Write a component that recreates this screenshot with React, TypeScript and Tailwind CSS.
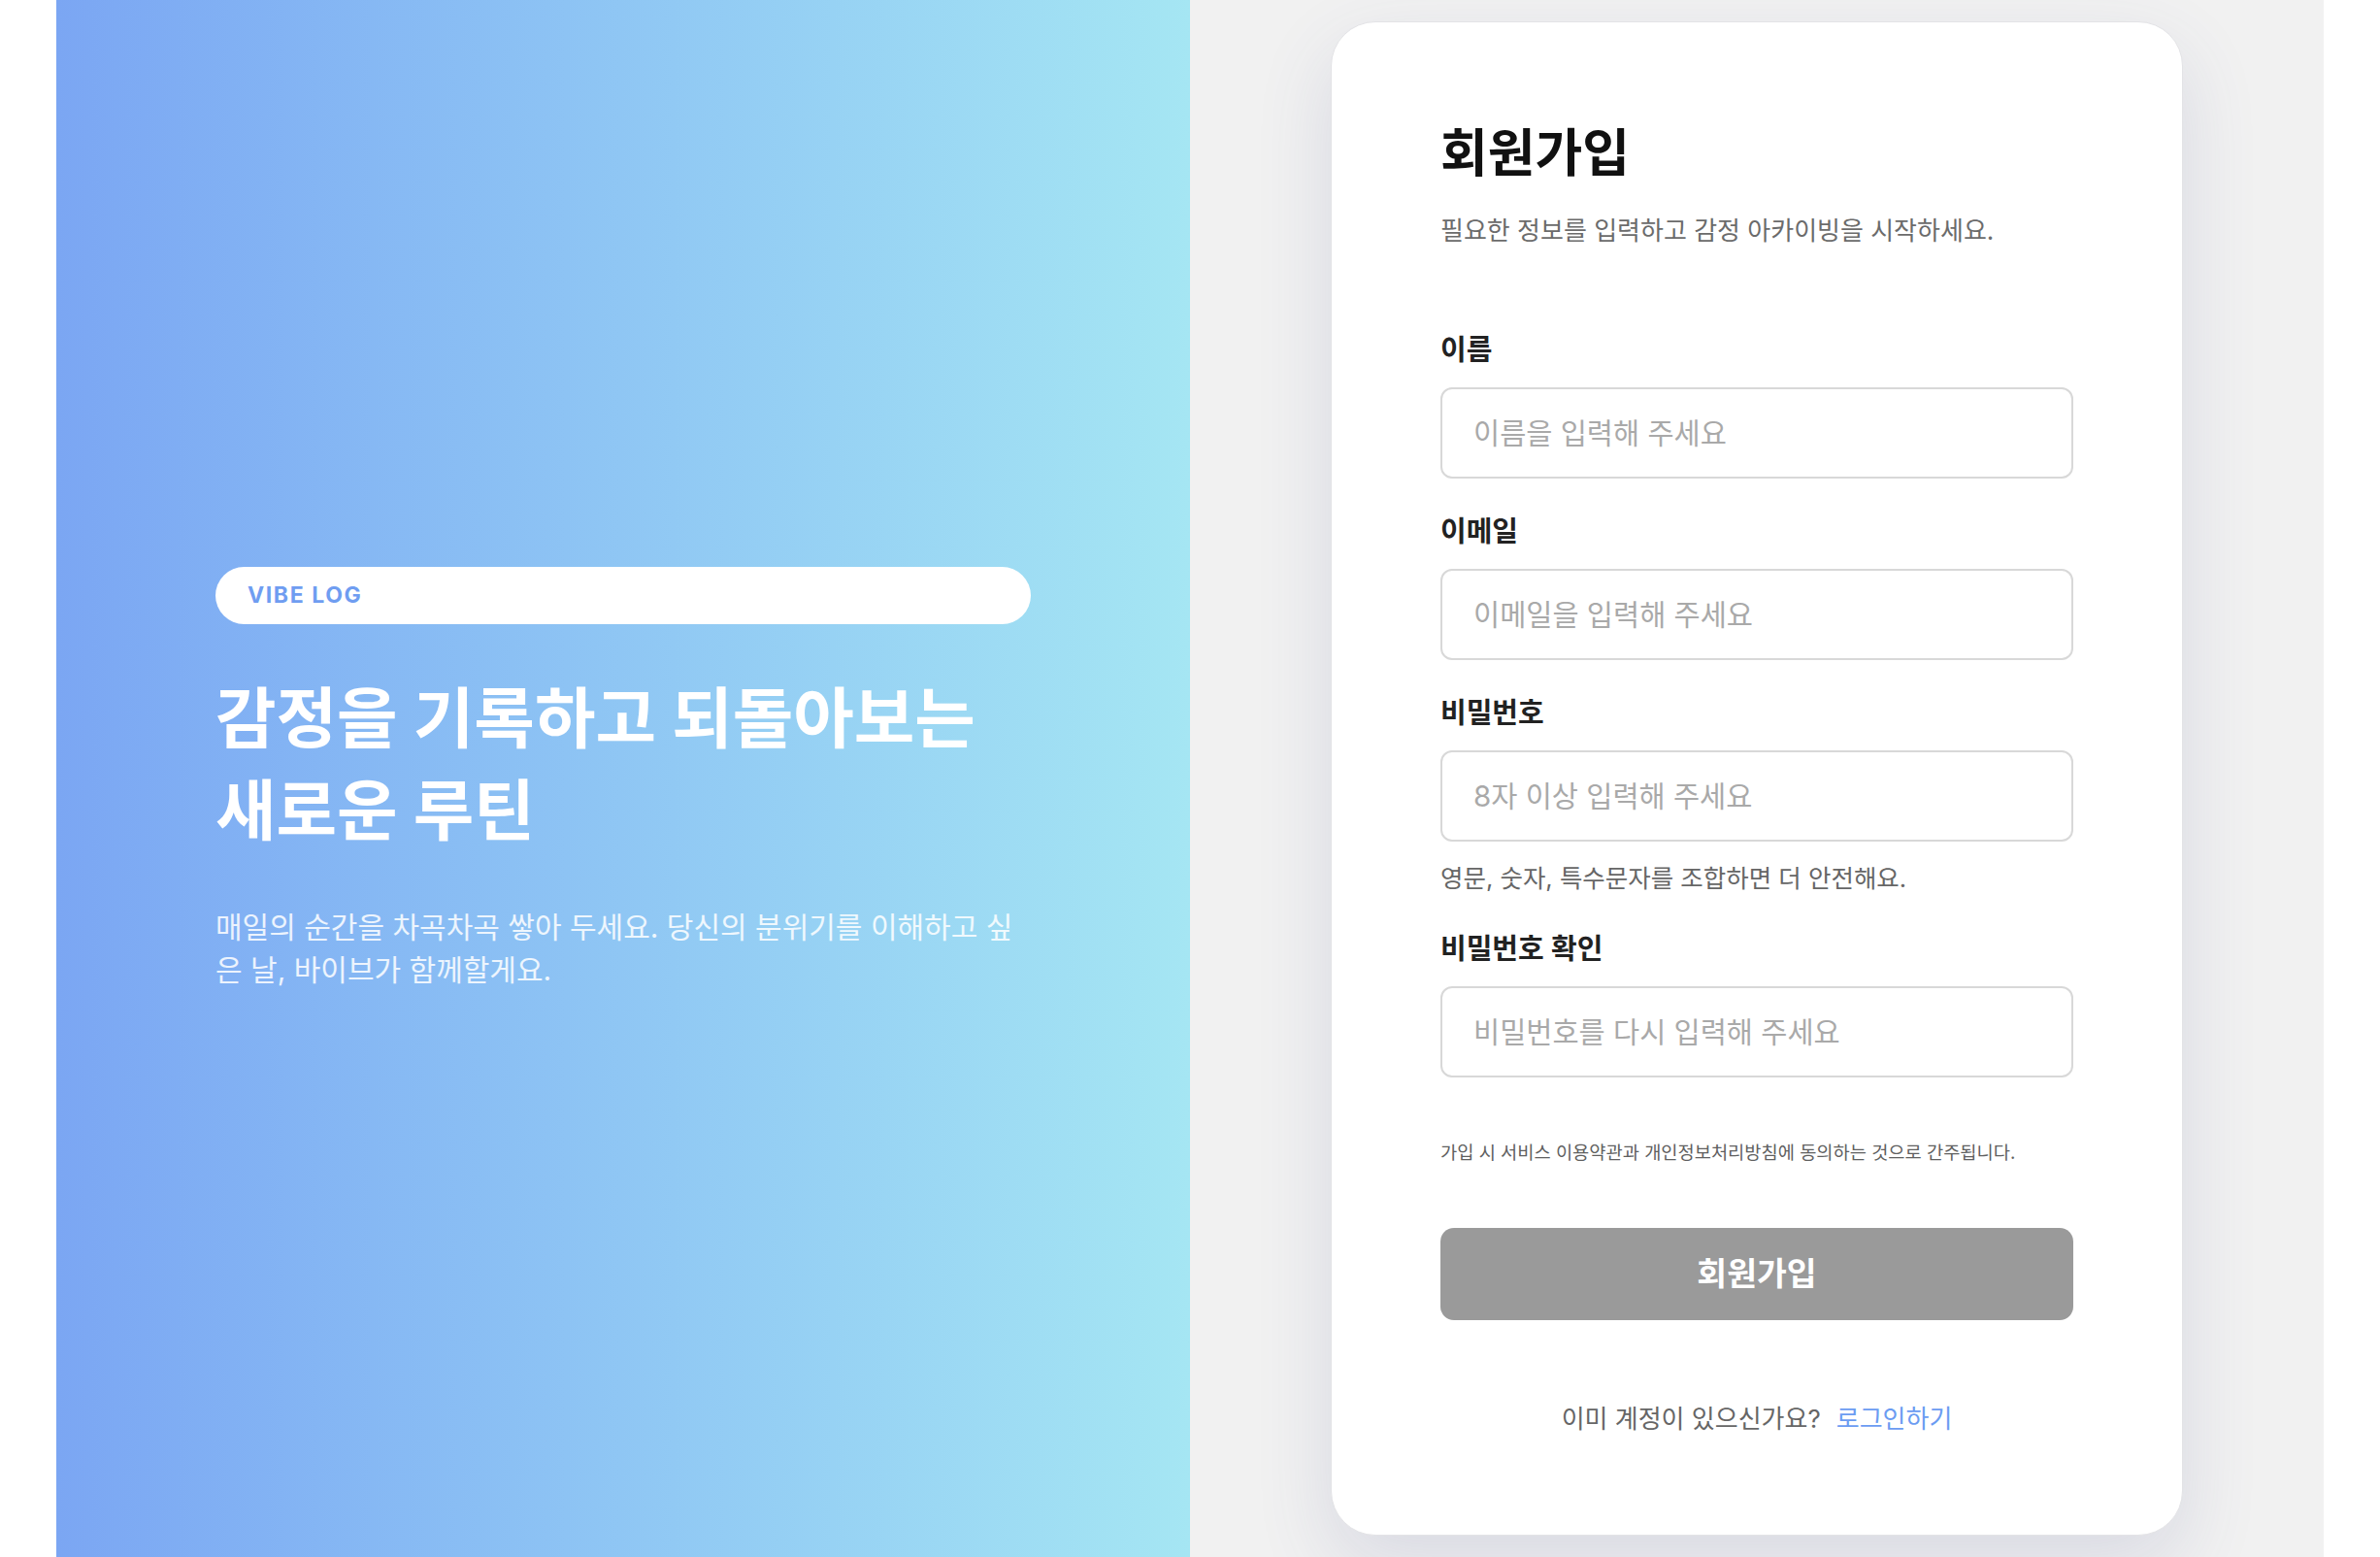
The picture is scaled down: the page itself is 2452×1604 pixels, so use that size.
const fontStack = "font-['Inter','Noto_Sans_CJK_KR',sans-serif]";

type Field = {
  label: string;
  placeholder: string;
  type: string;
  hint?: string;
};

const fields: Field[] = [
  { label: "이름", placeholder: "이름을 입력해 주세요", type: "text" },
  { label: "이메일", placeholder: "이메일을 입력해 주세요", type: "email" },
  {
    label: "비밀번호",
    placeholder: "8자 이상 입력해 주세요",
    type: "password",
    hint: "영문, 숫자, 특수문자를 조합하면 더 안전해요.",
  },
  { label: "비밀번호 확인", placeholder: "비밀번호를 다시 입력해 주세요", type: "password" },
];

function Hero() {
  return (
    <section className="flex items-center justify-center bg-gradient-to-r from-[#7ba6f3] to-[#a5e6f3]">
      <div className="w-[840px]">
        <div className="flex h-[59px] items-center rounded-full bg-white px-[33px]">
          <span className="font-['Inter',sans-serif] text-[23px] font-bold tracking-[0.07em] text-[#6f9df1]">
            VIBE LOG
          </span>
        </div>
        <h1 className="mt-[50px] text-[68px] font-bold leading-[95px] text-white">
          감정을 기록하고 되돌아보는
          <br />
          새로운 루틴
        </h1>
        <p className="mt-[50px] text-[30px] leading-[44px] text-white/85">
          매일의 순간을 차곡차곡 쌓아 두세요. 당신의 분위기를 이해하고 싶은 날, 바이브가 함께할게요.
        </p>
      </div>
    </section>
  );
}

function SignupCard() {
  return (
    <div className="w-[878px] rounded-[46px] border border-[#e3e3e6] bg-white px-[112px] pb-[102px] pt-[103px] shadow-[0_30px_80px_rgba(70,80,140,0.14)]">
      <h2 className="text-[53px] font-bold leading-[65px] text-[#111]">회원가입</h2>
      <p className="mt-[29px] text-[26px] leading-[36px] text-[#6b6b6b]">
        필요한 정보를 입력하고 감정 아카이빙을 시작하세요.
      </p>

      <form className="mt-[85px] flex flex-col gap-[35px]" onSubmit={(e) => e.preventDefault()}>
        {fields.map((f) => (
          <div key={f.label}>
            <label className="mb-[18px] block text-[29px] font-semibold leading-[40px] text-[#222]">
              {f.label}
            </label>
            <input
              type={f.type}
              placeholder={f.placeholder}
              className="h-[94px] w-full rounded-[12px] border-2 border-[#d8d8d8] bg-white px-[32px] text-[29.5px] text-[#222] outline-none placeholder:text-[#a9a9a9]"
            />
            {f.hint && (
              <p className="mt-[20px] text-[25.5px] leading-[36px] text-[#666]">{f.hint}</p>
            )}
          </div>
        ))}

        <p className="mt-[30px] text-[18.7px] leading-[26px] text-[#5f5f5f]">
          가입 시 서비스 이용약관과 개인정보처리방침에 동의하는 것으로 간주됩니다.
        </p>

        <button
          type="submit"
          className="mt-[29px] h-[95px] w-full rounded-[14px] bg-[#9a9a9a] text-[33.5px] font-semibold text-white"
        >
          회원가입
        </button>
      </form>

      <div className="mt-[85px] flex items-center justify-center gap-[16px] text-[26px] leading-[34px]">
        <span className="text-[#666]">이미 계정이 있으신가요?</span>
        <a href="#" className="text-[#6b9cf2]">
          로그인하기
        </a>
      </div>
    </div>
  );
}

export default function App() {
  return (
    <div className={`min-h-screen bg-white ${fontStack}`}>
      <div className="mx-auto grid min-h-screen max-w-[2336px] grid-cols-2">
        <Hero />
        <section className="flex items-center justify-center bg-[#f1f1f1]">
          <SignupCard />
        </section>
      </div>
    </div>
  );
}
